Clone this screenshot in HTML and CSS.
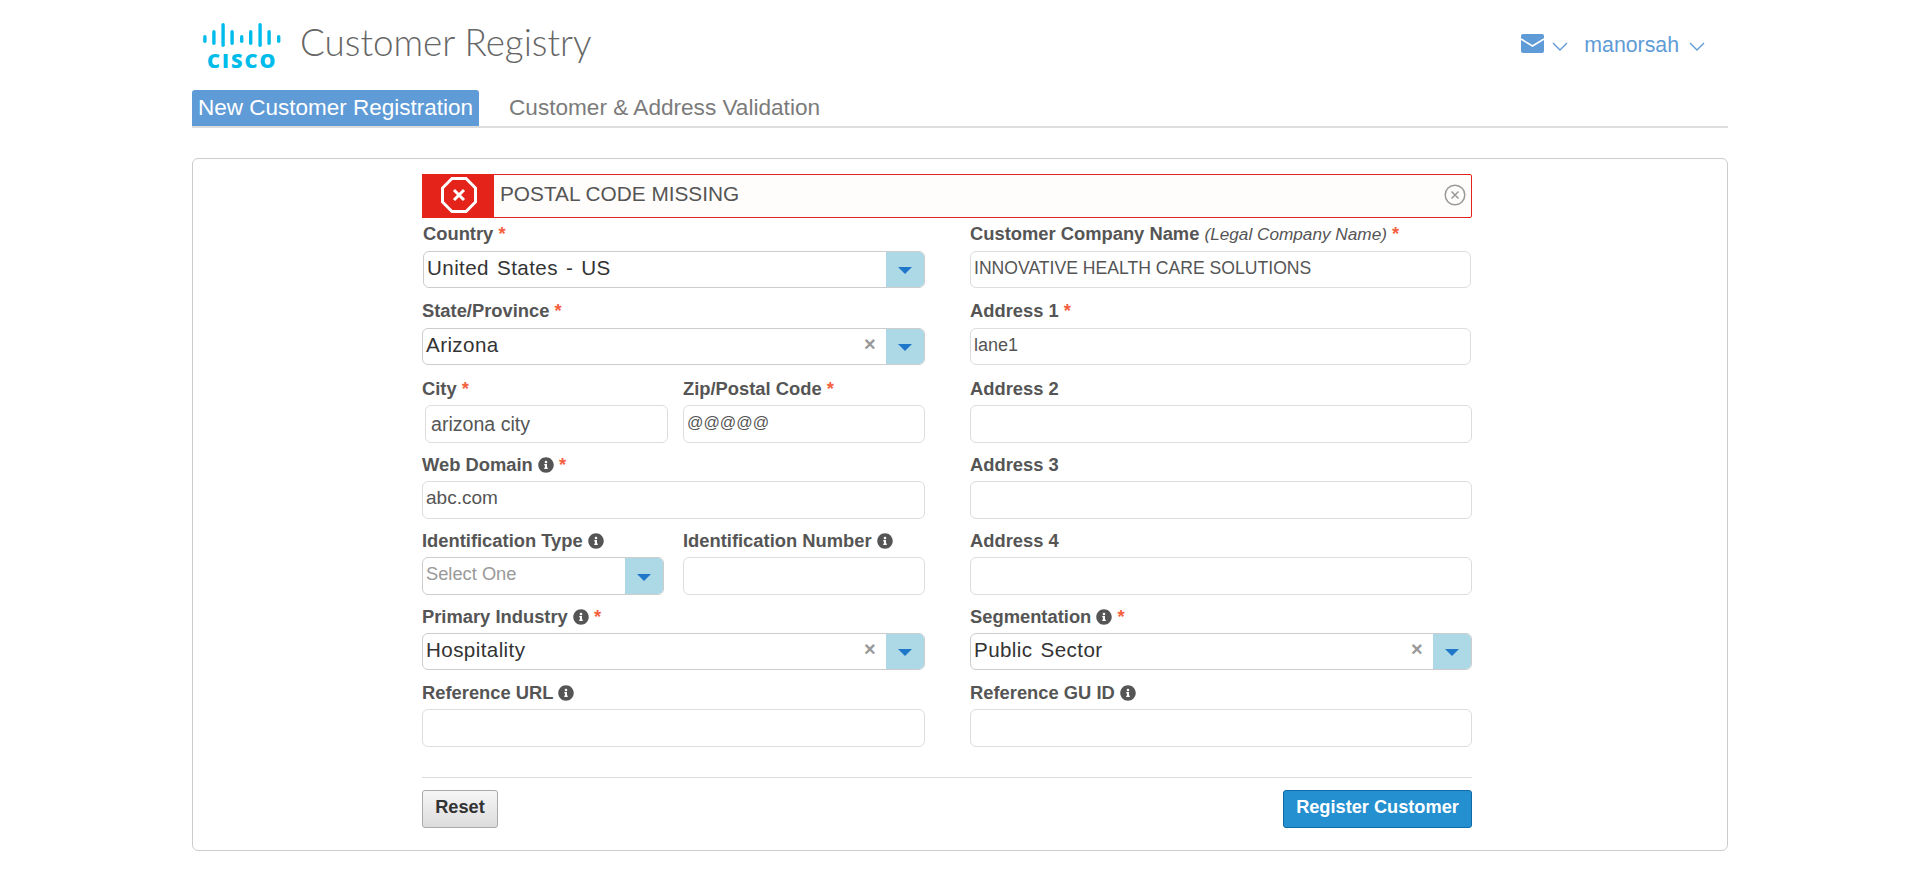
FILE: index.html
```html
<!DOCTYPE html>
<html>
<head>
    <title>Customer Registry</title>
    <link rel="stylesheet" href="styles.css">
</head>
<body>
    <svg class="icon-defs" width="0" height="0">
        <symbol id="info" viewBox="0 0 512 512">
            <path d="M256 8C119.043 8 8 119.083 8 256c0 136.997 111.043 248 248 248s248-111.003 248-248C504 119.083 392.957 8 256 8zm0 110c23.196 0 42 18.804 42 42s-18.804 42-42 42-42-18.804-42-42 18.804-42 42-42zm56 254c0 6.627-5.373 12-12 12h-88c-6.627 0-12-5.373-12-12v-24c0-6.627 5.373-12 12-12h12v-64h-12c-6.627 0-12-5.373-12-12v-24c0-6.627 5.373-12 12-12h64c6.627 0 12 5.373 12 12v100h12c6.627 0 12 5.373 12 12v24z"/>
        </symbol>
        <symbol id="chevron" viewBox="0 0 16 9">
            <path d="M1 1l7 7 7-7" fill="none" stroke="currentColor" stroke-width="1.4"/>
        </symbol>
    </svg>

    <div class="page">
        <!-- Header -->
        <header class="header">
            <div class="brand">
                <div class="logo">
                    <svg class="logo-bars" width="80" height="25" viewBox="0 0 80 25">
                        <rect x="1.2" y="12" width="3.4" height="8" rx="1.7"/>
                        <rect x="10.2" y="7" width="3.4" height="15" rx="1.7"/>
                        <rect x="19.4" y="0" width="3.4" height="24" rx="1.7"/>
                        <rect x="28.4" y="7" width="3.4" height="15" rx="1.7"/>
                        <rect x="38" y="12" width="3.4" height="8" rx="1.7"/>
                        <rect x="47" y="7" width="3.4" height="15" rx="1.7"/>
                        <rect x="56.4" y="0" width="3.4" height="24" rx="1.7"/>
                        <rect x="65.4" y="7" width="3.4" height="15" rx="1.7"/>
                        <rect x="75" y="12" width="3.4" height="8" rx="1.7"/>
                    </svg>
                    <span class="logo-word">CISCO</span>
                </div>
                <h1 class="title">Customer Registry</h1>
            </div>
            <div class="user-menu">
                <svg class="mail-icon" width="23" height="19" viewBox="0 0 23 19">
                    <rect width="23" height="19" rx="2" fill="#5f9bd6"/>
                    <path d="M0 5l11.5 7L23 5" fill="none" stroke="#fff" stroke-width="1.6"/>
                </svg>
                <svg class="chevron chevron-mail" width="16" height="9"><use href="#chevron"/></svg>
                <span class="user-name">manorsah</span>
                <svg class="chevron" width="16" height="9"><use href="#chevron"/></svg>
            </div>
        </header>

        <!-- Tabs -->
        <nav class="tabs">
            <a class="tab tab-active">New Customer Registration</a>
            <a class="tab">Customer &amp; Address Validation</a>
        </nav>

        <div class="card">
            <form class="form">
                <div class="alert">
                    <div class="alert-mark">
                        <svg width="38" height="38" viewBox="0 0 38 38">
                            <path d="M12 2.5h14L35.500 12v14L26 35.500H12L2.500 26V12z" fill="none" stroke="#fff" stroke-width="3"/>
                            <path d="M14 14l10 10M24 14L14 24" stroke="#fff" stroke-width="3"/>
                        </svg>
                    </div>
                    <span class="alert-text">POSTAL CODE MISSING</span>
                    <svg class="alert-close" width="22" height="22" viewBox="0 0 22 22">
                        <circle cx="11" cy="11" r="9.800" fill="none" stroke="#999" stroke-width="1.500"/>
                        <path d="M7.500 7.500l7 7M14.500 7.500l-7 7" stroke="#999" stroke-width="1.500"/>
                    </svg>
                </div>

                <div class="grid">
                    <!-- row 1 -->
                    <div class="field field-top field-country">
                        <label>Country <em class="req">*</em></label>
                        <div class="select"><span class="select-value">United States - US</span><span class="select-btn"><i class="caret"></i></span></div>
                    </div>
                    <div class="field field-top">
                        <label>Customer Company Name <span class="hint">(Legal Company Name)</span> <em class="req">*</em></label>
                        <input class="input input-short input-caps" type="text" value="INNOVATIVE HEALTH CARE SOLUTIONS">
                    </div>

                    <!-- row 2 -->
                    <div class="field field-top">
                        <label>State/Province <em class="req">*</em></label>
                        <div class="select"><span class="select-value">Arizona</span><span class="clear">×</span><span class="select-btn"><i class="caret"></i></span></div>
                    </div>
                    <div class="field field-top">
                        <label>Address 1 <em class="req">*</em></label>
                        <input class="input input-short" type="text" value="lane1">
                    </div>

                    <!-- row 3 -->
                    <div class="split">
                        <div class="field">
                            <label>City <em class="req">*</em></label>
                            <input class="input input-city" type="text" value="arizona city">
                        </div>
                        <div class="field">
                            <label>Zip/Postal Code <em class="req">*</em></label>
                            <input class="input input-zip" type="text" value="@@@@@">
                        </div>
                    </div>
                    <div class="field">
                        <label>Address 2</label>
                        <input class="input" type="text">
                    </div>

                    <!-- row 4 -->
                    <div class="field">
                        <label>Web Domain <svg class="info"><use href="#info"/></svg> <em class="req">*</em></label>
                        <input class="input input-domain" type="text" value="abc.com">
                    </div>
                    <div class="field">
                        <label>Address 3</label>
                        <input class="input" type="text">
                    </div>

                    <!-- row 5 -->
                    <div class="split">
                        <div class="field">
                            <label>Identification Type <svg class="info"><use href="#info"/></svg></label>
                            <div class="select select-full"><span class="select-value select-empty">Select One</span><span class="select-btn"><i class="caret"></i></span></div>
                        </div>
                        <div class="field">
                            <label>Identification Number <svg class="info"><use href="#info"/></svg></label>
                            <input class="input" type="text">
                        </div>
                    </div>
                    <div class="field">
                        <label>Address 4</label>
                        <input class="input" type="text">
                    </div>

                    <!-- row 6 -->
                    <div class="field">
                        <label>Primary Industry <svg class="info"><use href="#info"/></svg> <em class="req">*</em></label>
                        <div class="select"><span class="select-value">Hospitality</span><span class="clear">×</span><span class="select-btn"><i class="caret"></i></span></div>
                    </div>
                    <div class="field">
                        <label>Segmentation <svg class="info"><use href="#info"/></svg> <em class="req">*</em></label>
                        <div class="select"><span class="select-value">Public Sector</span><span class="clear">×</span><span class="select-btn"><i class="caret"></i></span></div>
                    </div>

                    <!-- row 7 -->
                    <div class="field">
                        <label>Reference URL <svg class="info"><use href="#info"/></svg></label>
                        <input class="input" type="text">
                    </div>
                    <div class="field">
                        <label>Reference GU ID <svg class="info"><use href="#info"/></svg></label>
                        <input class="input" type="text">
                    </div>
                </div>

                <div class="actions">
                    <button class="btn btn-reset" type="button">Reset</button>
                    <button class="btn btn-primary" type="button">Register Customer</button>
                </div>
            </form>
        </div>
    </div>
</body>
</html>
```

FILE: styles.css
```css
/* Page */
* {
    box-sizing: border-box;
}
body {
    margin: 0;
    background: #fff;
    font-family: "Liberation Sans", Arial, sans-serif;
    color: #555;
}
.icon-defs {
    display: block;
    height: 0;
}
.page {
    width: 1536px;
    margin: 0 auto;
}

/* Header */
.header {
    display: flex;
    justify-content: space-between;
    height: 90px;
}
.brand {
    display: flex;
    padding: 23px 0 0 10px;
}
.logo {
    width: 80px;
    height: 46px;
}
.logo-bars {
    display: block;
    fill: #00bceb;
}
.logo-word {
    display: block;
    margin: 4px 0 0 5px;
    font-family: "Open Sans", sans-serif;
    font-size: 20px;
    line-height: 18px;
    font-weight: 800;
    letter-spacing: 2px;
    color: #00bceb;
}
.title {
    margin: -1px 0 0 18px;
    font-family: Lato, sans-serif;
    font-size: 36.8px;
    line-height: 40px;
    font-weight: 300;
    color: #666;
}
.user-menu {
    display: flex;
    align-items: center;
    height: 88px;
    padding-right: 23px;
    color: #5f9bd6;
}
.mail-icon {
    margin-top: -2px;
}
.chevron {
    margin-top: 4px;
    margin-left: 10px;
}
.chevron-mail {
    margin-left: 8px;
}
.user-name {
    margin-left: 16px;
    padding-top: 2px;
    font-size: 21.3px;
}

/* Tabs */
.tabs {
    display: flex;
    height: 38px;
    border-bottom: 2px solid #ddd;
}
.tab {
    height: 36px;
    padding: 0 6px;
    font-size: 22.6px;
    line-height: 35px;
    color: #7b7b7b;
    border-radius: 3px 3px 0 0;
}
.tab-active {
    width: 287px;
    margin-right: 24px;
    background: #5f9bd6;
    font-size: 22.5px;
    color: #fff;
    white-space: nowrap;
}

/* Card */
.card {
    height: 693px;
    margin-top: 30px;
    padding: 15px 0 0 229px;
    border: 1px solid #ccc;
    border-radius: 6px;
}
.form {
    width: 1050px;
}

/* Error message */
.alert {
    display: flex;
    align-items: center;
    height: 44px;
    margin-bottom: 6px;
    padding-right: 5px;
    background: #fffdfb;
    border: 1px solid #e4231a;
    border-radius: 2px;
}
.alert-mark {
    display: flex;
    align-items: center;
    justify-content: center;
    width: 72px;
    height: 44px;
    margin: -1px 0 -1px -1px;
    padding: 0 0 2px 2px;
    background: #e4231a;
}
.alert-text {
    flex: 1;
    padding: 0 0 4px 6px;
    font-size: 20.8px;
}
.alert-close {
    margin-top: -2px;
}

/* Form fields */
.grid {
    display: grid;
    grid-template-columns: 503px 502px;
    grid-template-rows: 65px 66px 64px 64px 64px 64px 64px;
    column-gap: 45px;
    row-gap: 12px;
}
.split {
    display: grid;
    grid-template-columns: 242px 242px;
    column-gap: 19px;
}
.field label {
    display: block;
    height: 20px;
    margin-bottom: 6px;
    font-size: 18.35px;
    line-height: 20px;
    font-weight: bold;
    white-space: nowrap;
}
.field-top label {
    margin-bottom: 7px;
}
.field-country {
    padding-left: 1px;
}
.req {
    font-style: normal;
    color: #f5603f;
}
.hint {
    font-size: 17.2px;
    font-style: italic;
    font-weight: normal;
}
.info {
    width: 16px;
    height: 16px;
    vertical-align: -2px;
    fill: #555;
}
.input {
    display: block;
    width: 100%;
    height: 38px;
    padding: 0 3px 3px;
    border: 1px solid #ddd;
    border-radius: 6px;
    background: #fff;
    font-family: "Liberation Sans", Arial, sans-serif;
    font-size: 18px;
    color: #555;
    outline: none;
}
.input-short {
    width: 501px;
    height: 37px;
}
.input-caps {
    font-size: 17.6px;
}
.input-domain {
    padding-bottom: 5px;
    font-size: 19px;
}
.input-zip {
    font-size: 16.2px;
}
.input-city {
    width: 243px;
    margin-left: 3px;
    padding-left: 5px;
    padding-top: 3px;
    padding-bottom: 2px;
    font-size: 19.6px;
}
.select {
    display: flex;
    align-items: center;
    height: 37px;
    padding: 0 0 0 3px;
    border: 1px solid #ccc;
    border-radius: 6px;
    overflow: hidden;
}
.select-full {
    height: 38px;
}
.select-value {
    flex: 1;
    padding-bottom: 4px;
    font-size: 20.6px;
    letter-spacing: 0.4px;
    word-spacing: 2px;
    color: #333;
}
.select-empty {
    padding-bottom: 4px;
    font-size: 18.3px;
    letter-spacing: 0;
    word-spacing: 0;
    color: #999;
}
.clear {
    width: 22px;
    margin-top: -4px;
    font-size: 20px;
    color: #999;
    font-weight: bold;
}
.select-btn {
    display: flex;
    align-items: center;
    justify-content: center;
    width: 38px;
    height: 37px;
    background: #add8e6;
}
.caret {
    width: 0;
    height: 0;
    margin-top: 2px;
    border-left: 7px solid transparent;
    border-right: 7px solid transparent;
    border-top: 7px solid #1f77c9;
}

/* Buttons */
.actions {
    display: flex;
    justify-content: space-between;
    margin-top: 30px;
    padding-top: 12px;
    border-top: 1px solid #ddd;
}
.btn {
    height: 38px;
    border-radius: 3px;
    font-family: "Liberation Sans", Arial, sans-serif;
    font-size: 18.2px;
    font-weight: bold;
    padding: 0 10px 4px;
}
.btn-reset {
    width: 76px;
    border: 1px solid #aaa;
    background: linear-gradient(#f6f6f6, #dcdcdc);
    color: #333;
}
.btn-primary {
    width: 189px;
    border: 1px solid #0f6aa8;
    background: #2590d0;
    color: #fff;
}
```
